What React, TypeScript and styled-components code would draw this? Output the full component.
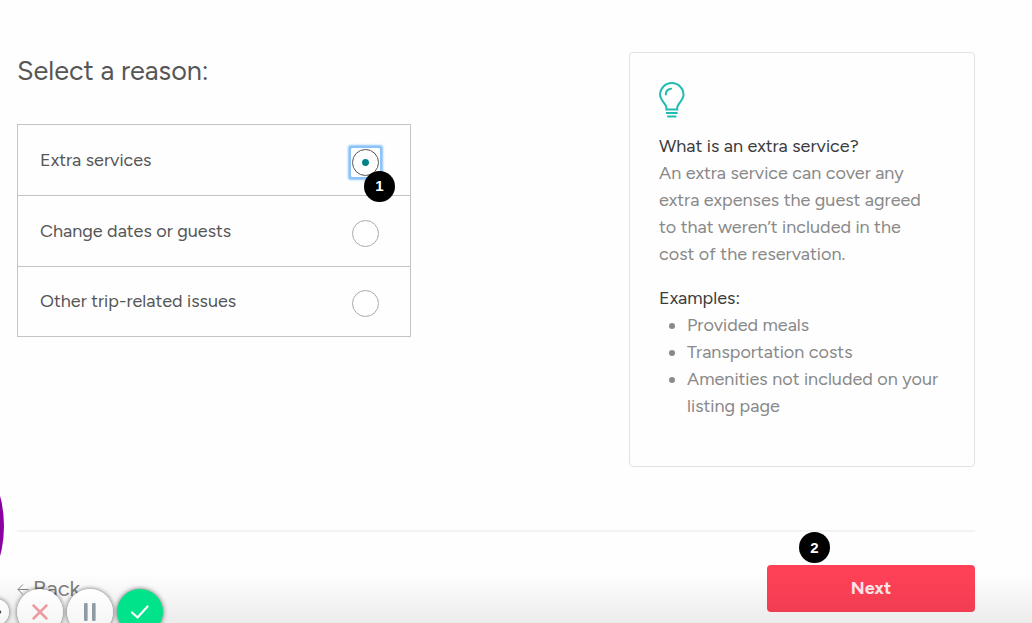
import React, { useState } from "react";
import styled, { createGlobalStyle } from "styled-components";

const GlobalStyle = createGlobalStyle`
  *, *::before, *::after { box-sizing: border-box; }
  body {
    margin: 0;
    background: #fefefe;
    color: #565656;
    font-family: Figtree, Lato, "Liberation Sans", sans-serif;
    font-size: 18px;
    line-height: 27px;
  }
`;

const Page = styled.div`
  position: relative;
  min-height: 100vh;
  padding: 52px 57px 11px 17px;
  overflow: hidden;
`;

const Columns = styled.main`
  display: flex;
  justify-content: space-between;
  align-items: flex-start;
  gap: 40px;
`;

const ReasonForm = styled.form`
  flex: 0 1 394px;
`;

const Title = styled.h1`
  margin: 0 0 34px;
  font-size: 27px;
  line-height: 38px;
  font-weight: 400;
`;

const Options = styled.div`
  border: 1px solid #c4c4c4;
`;

const Option = styled.label`
  display: flex;
  align-items: center;
  justify-content: space-between;
  height: 70px;
  padding: 0 30px 0 22px;
  cursor: pointer;

  & + & {
    height: 71px;
    border-top: 1px solid #c4c4c4;
  }

  &:last-child {
    height: 70px;
  }
`;

const RadioFrame = styled.span<{ $active: boolean }>`
  position: relative;
  display: flex;
  margin-top: 4px;
  padding: 1px;
  border-radius: 1px;
  box-shadow: ${(p) => (p.$active ? "0 0 0 2px #8cc3f8, 0 0 2px 3px #8cc3f8" : "none")};
`;

const Radio = styled.input`
  appearance: none;
  width: 27px;
  height: 27px;
  margin: 0;
  border: 1px solid #aaa;
  border-radius: 50%;
  background: #fff;
  outline: none;

  &:checked {
    border-color: #565656;
    background: radial-gradient(circle, #008489 3px, #fff 4px);
  }
`;

const StepBadge = styled.span`
  position: absolute;
  display: flex;
  align-items: center;
  justify-content: center;
  width: 31px;
  height: 31px;
  border-radius: 50%;
  background: #000;
  color: #fff;
  font-family: "Liberation Sans", sans-serif;
  font-size: 15px;
  font-weight: 700;
  line-height: 20px;
`;

const RadioBadge = styled(StepBadge)`
  top: 23px;
  left: 13px;
`;

const NextBadge = styled(StepBadge)`
  bottom: 49px;
  left: 32px;
`;

const InfoCard = styled.aside`
  flex: 0 1 346px;
  padding: 29px 29px 46px;
  border: 1px solid #e2e2e2;
  border-radius: 4px;
  color: #898989;
`;

const Bulb = styled.svg`
  display: block;
  width: 26px;
  height: 36px;
  margin-bottom: 15px;
`;

const InfoTitle = styled.h2`
  margin: 0;
  font-size: 18px;
  line-height: 27px;
  font-weight: 400;
  color: #3c3c3c;
`;

const InfoText = styled.p`
  margin: 0 0 17px;
  padding-right: 10px;
`;

const Examples = styled.ul`
  margin: 0;
  padding-left: 28px;
`;

const Divider = styled.hr`
  height: 2px;
  margin: 63px 0 33px;
  border: 0;
  background: #f3f3f3;
`;

const Footer = styled.footer`
  display: flex;
  align-items: center;
  justify-content: space-between;
`;

const BackLink = styled.a`
  display: flex;
  align-items: center;
  gap: 4px;
  color: #808080;
  font-size: 22px;
  text-decoration: none;
`;

const NextWrap = styled.div`
  position: relative;
  flex: 0 0 208px;
`;

const NextButton = styled.button`
  width: 100%;
  height: 47px;
  border: 0;
  border-radius: 4px;
  background: #ff4157;
  color: #ffe9ec;
  font: inherit;
  font-weight: 700;
`;

const BottomShade = styled.div`
  position: fixed;
  right: 0;
  bottom: 0;
  left: 0;
  height: 50px;
  background: linear-gradient(rgba(0, 0, 0, 0), rgba(0, 0, 0, 0.07));
  pointer-events: none;
`;

const Bubble = styled.div`
  position: fixed;
  bottom: -23px;
  left: -236px;
  width: 240px;
  height: 240px;
  border-radius: 50%;
  background: #8a00a0;
`;

const Recorder = styled.div`
  position: fixed;
  bottom: -12px;
  left: -17px;
  display: flex;
  align-items: center;
  gap: 4px;
`;

const RoundButton = styled.button<{ $small?: boolean; $green?: boolean }>`
  display: flex;
  align-items: center;
  justify-content: center;
  width: ${(p) => (p.$small ? 26 : 46)}px;
  height: ${(p) => (p.$small ? 26 : 46)}px;
  margin: 0 ${(p) => (p.$small ? 4 : 0)}px 0 0;
  padding: 0;
  border: 0;
  border-radius: 50%;
  background: ${(p) => (p.$green ? "#00e38a" : "linear-gradient(#fff, #f3f3f3)")};
  box-shadow: 0 0 5px rgba(0, 0, 0, 0.6);
`;

const reasons = ["Extra services", "Change dates or guests", "Other trip-related issues"];

export default function App() {
  const [selected, setSelected] = useState(reasons[0]);

  return (
    <>
      <GlobalStyle />
      <Page>
        <Columns>
          <ReasonForm>
            <Title id="reason-title">Select a reason:</Title>
            <Options role="radiogroup" aria-labelledby="reason-title">
              {reasons.map((reason, i) => (
                <Option key={reason}>
                  <span>{reason}</span>
                  <RadioFrame $active={selected === reason}>
                    <Radio
                      type="radio"
                      name="reason"
                      value={reason}
                      checked={selected === reason}
                      onChange={() => setSelected(reason)}
                    />
                    {i === 0 && <RadioBadge aria-hidden="true">1</RadioBadge>}
                  </RadioFrame>
                </Option>
              ))}
            </Options>
          </ReasonForm>

          <InfoCard>
            <Bulb viewBox="0 0 26 36" fill="none" stroke="#22bbb1" strokeWidth="2" aria-hidden="true">
              <path d="M7.4 27.6V25.8C7.4 21.6 1.1 18.4 1.1 12.7a11.7 11.7 0 0 1 23.4 0C24.5 18.4 18.2 21.6 18.2 25.8v1.8Z" />
              <path d="M6.8 12.4c0-3 2-5.2 5.2-5.7" strokeLinecap="round" />
              <path d="M7 31.1h11.6M8.2 34.5h9.2" />
            </Bulb>
            <InfoTitle>What is an extra service?</InfoTitle>
            <InfoText>
              An extra service can cover any extra expenses the guest agreed to that weren’t included in the cost of
              the reservation.
            </InfoText>
            <InfoTitle>Examples:</InfoTitle>
            <Examples>
              <li>Provided meals</li>
              <li>Transportation costs</li>
              <li>Amenities not included on your listing page</li>
            </Examples>
          </InfoCard>
        </Columns>

        <Divider />

        <Footer>
          <BackLink href="#back">
            <svg width="12" height="12" viewBox="0 0 12 12" fill="none" stroke="#8a8a8a" aria-hidden="true">
              <path d="M11.5 6.5H1M5.8 1.5 1 6.5l4.8 5" />
            </svg>
            Back
          </BackLink>
          <NextWrap>
            <NextButton type="button">Next</NextButton>
            <NextBadge aria-hidden="true">2</NextBadge>
          </NextWrap>
        </Footer>
      </Page>

      <BottomShade />
      <Bubble />
      <Recorder>
        <RoundButton $small type="button" aria-label="Collapse">
          <svg width="26" height="26" viewBox="0 0 26 26" aria-hidden="true">
            <circle cx="16.5" cy="13" r="1.8" fill="#444" />
          </svg>
        </RoundButton>
        <RoundButton type="button" aria-label="Cancel recording">
          <svg width="46" height="46" viewBox="0 0 46 46" stroke="#ef9a9e" strokeWidth="2.5" strokeLinecap="round" aria-hidden="true">
            <path d="m16.5 16.500 13 13M29.500 16.500l-13 13" />
          </svg>
        </RoundButton>
        <RoundButton type="button" aria-label="Pause recording">
          <svg width="46" height="46" viewBox="0 0 46 46" fill="#8e9ba5" aria-hidden="true">
            <rect x="17" y="14" width="3.6" height="18" rx="1" />
            <rect x="25" y="14" width="3.6" height="18" rx="1" />
          </svg>
        </RoundButton>
        <RoundButton $green type="button" aria-label="Finish recording">
          <svg width="46" height="46" viewBox="0 0 46 46" fill="none" stroke="#fff" strokeWidth="2.2" strokeLinecap="round" strokeLinejoin="round" aria-hidden="true">
            <path d="m15 23.5 5.5 5L30.500 17.500" />
          </svg>
        </RoundButton>
      </Recorder>
    </>
  );
}
